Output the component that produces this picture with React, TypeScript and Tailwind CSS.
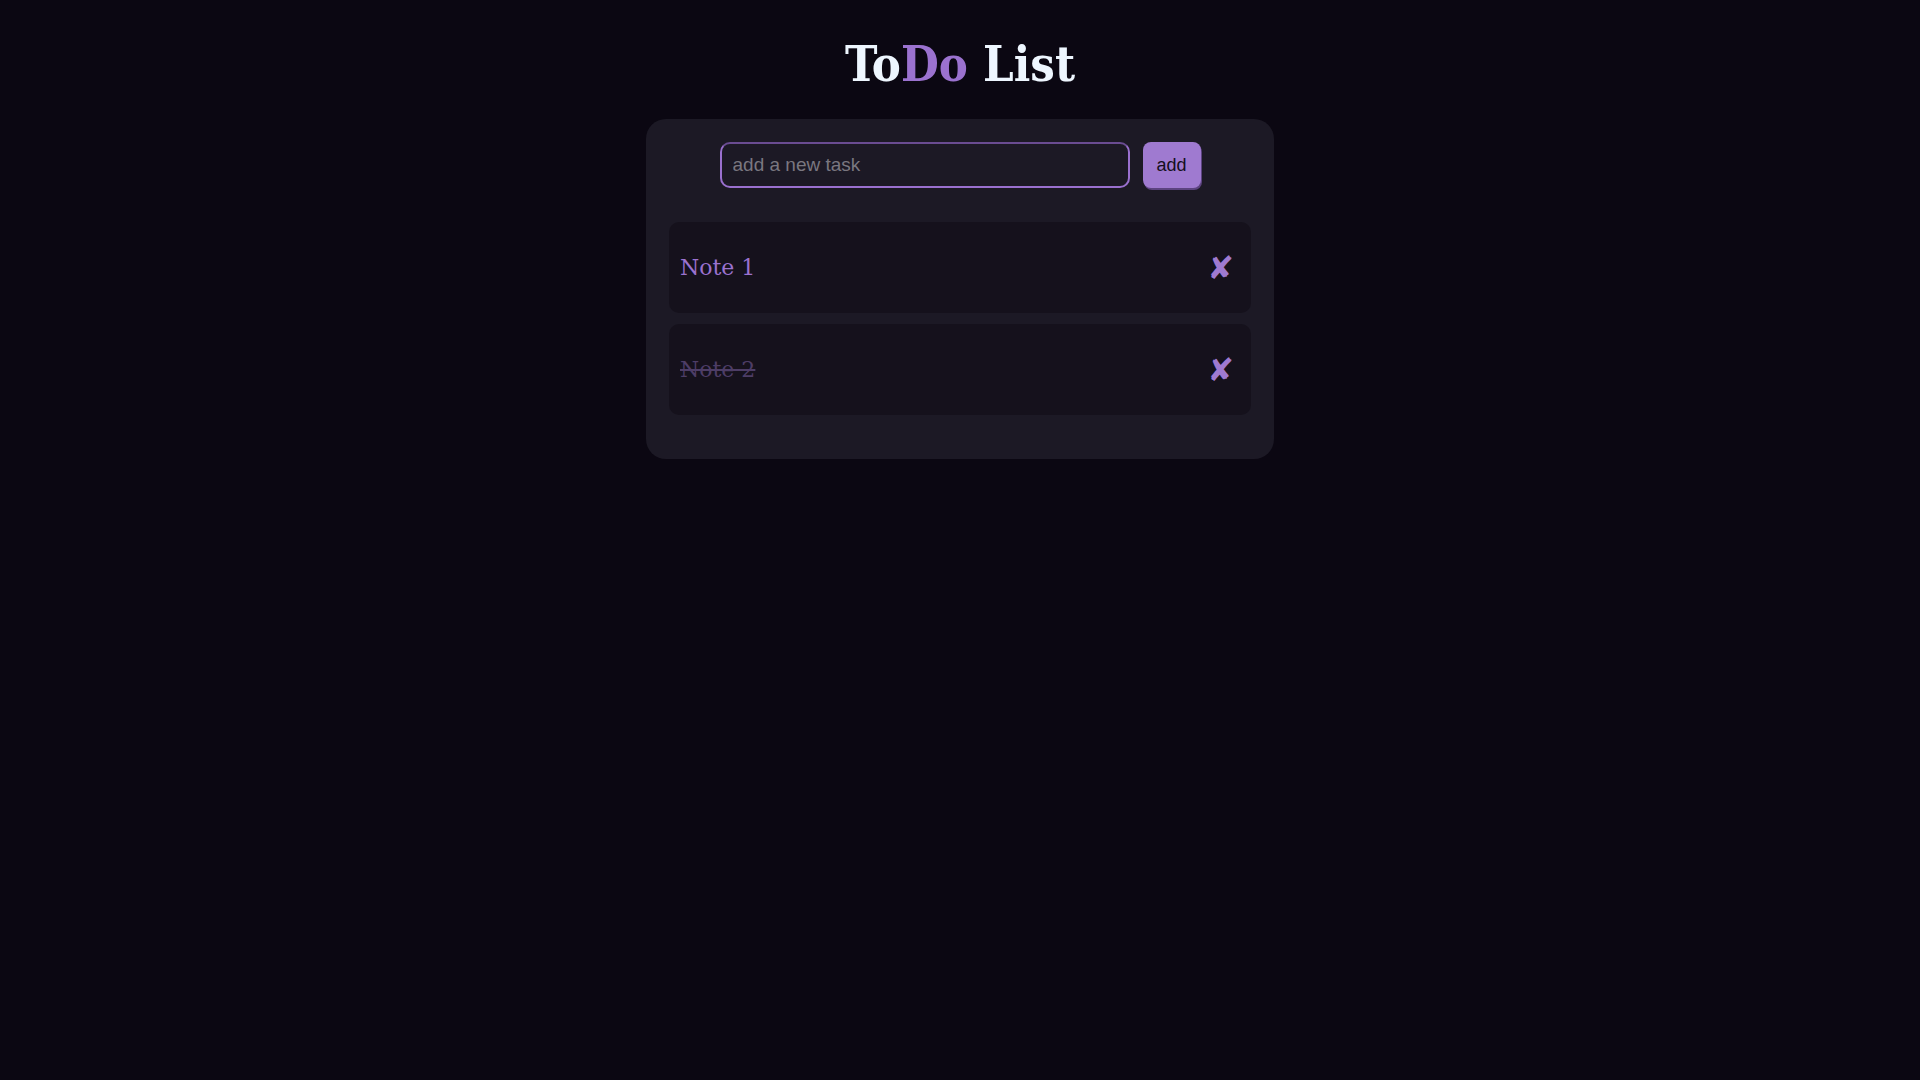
import { useState } from "react";

type Task = { id: number; text: string; done: boolean };

const App = () => {
  const [tasks, setTasks] = useState<Task[]>([
    { id: 1, text: "Note 1", done: false },
    { id: 2, text: "Note 2", done: true },
  ]);
  const [value, setValue] = useState("");

  const addTask = () => {
    if (!value.trim()) return;
    setTasks([...tasks, { id: Date.now(), text: value.trim(), done: false }]);
    setValue("");
  };

  return (
    <div className="min-h-screen bg-[#0b0712] flex flex-col items-center">
      <h1 className="mt-[36px] text-[48.5px] leading-[56px] font-bold text-[#eef6ff] [font-stretch:condensed] font-['DejaVu_Serif_Condensed','DejaVu_Serif',serif]">
        To<span className="text-[#9b72cf]">Do</span> List
      </h1>

      <div className="mt-[27px] w-[628px] rounded-[20px] bg-[#1c1925] px-[23px] pt-[23px] pb-[44px]">
        {/* input row */}
        <div className="flex justify-center gap-[13px]">
          <input
            value={value}
            onChange={(e) => setValue(e.target.value)}
            placeholder="add a new task"
            className="w-[410px] h-[46px] rounded-[10px] border-2 border-[#9a70cf] border-t-[#6a4c92] bg-[#1c1925] px-[11px] text-[19px] text-[#d8d0e4] placeholder:text-[#7a7780] outline-none font-['Liberation_Sans',sans-serif]"
          />
          <button
            onClick={addTask}
            className="w-[58px] h-[46px] rounded-[8px] bg-[#9f7ad0] text-[18px] text-[#150f1c] shadow-[1px_2px_0_#5c4380] font-['Liberation_Sans',sans-serif]"
          >
            add
          </button>
        </div>

        {/* list */}
        <div className="mt-[34px] flex flex-col gap-[11px]">
          {tasks.map((t) => (
            <div
              key={t.id}
              className="h-[91px] rounded-[10px] bg-[#15111c] flex items-center justify-between pl-[11px] pr-[17px]"
            >
              <span
                onClick={() =>
                  setTasks(tasks.map((x) => (x.id === t.id ? { ...x, done: !x.done } : x)))
                }
                className={
                  t.done
                    ? "text-[22px] text-[#4d3d66] line-through font-['DejaVu_Serif',serif] cursor-pointer"
                    : "text-[22px] text-[#9b72cf] font-['DejaVu_Serif',serif] cursor-pointer"
                }
              >
                {t.text}
              </span>
              <button
                onClick={() => setTasks(tasks.filter((x) => x.id !== t.id))}
                className="text-[32px] leading-none text-[#9f7ad0] font-['DejaVu_Sans',sans-serif]"
              >
                ✘
              </button>
            </div>
          ))}
        </div>
      </div>
    </div>
  );
};

export default App;
